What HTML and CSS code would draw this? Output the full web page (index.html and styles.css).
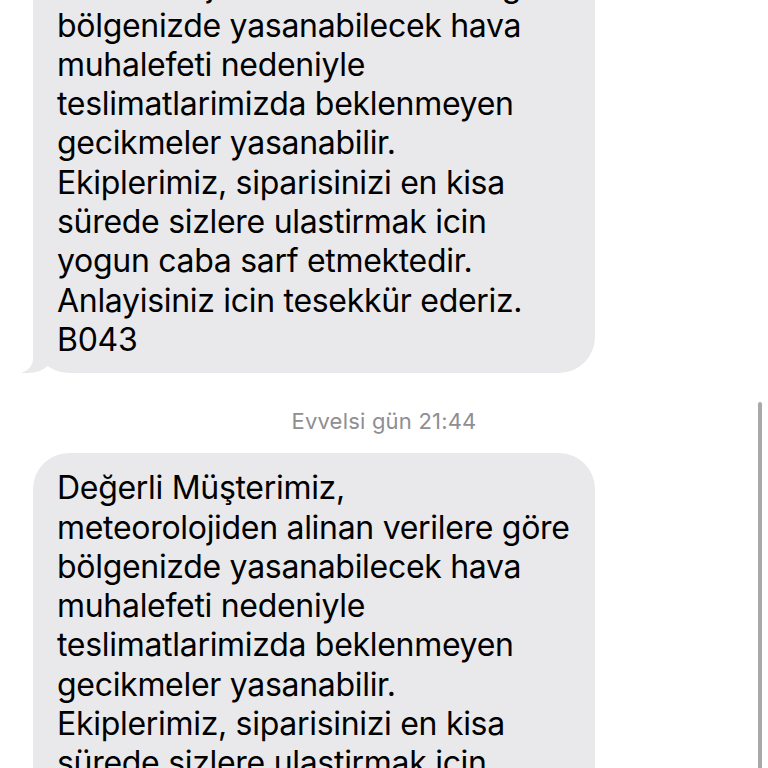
FILE: index.html
```html
<!DOCTYPE html>
<html lang="tr">
<head>
<meta charset="utf-8">
<link rel="stylesheet" href="styles.css">
</head>
<body>
<div class="thread">
  <div class="bubble">
    <p class="msg">Değerli Müşterimiz,<br>meteorolojiden alinan verilere göre<br>bölgenizde yasanabilecek hava<br>muhalefeti nedeniyle<br>teslimatlarimizda beklenmeyen<br>gecikmeler yasanabilir.<br>Ekiplerimiz, siparisinizi en kisa<br>sürede sizlere ulastirmak icin<br>yogun caba sarf etmektedir.<br>Anlayisiniz icin tesekkür ederiz.<br>B043</p>
  </div>
  <div class="stamp">Evvelsi gün 21:44</div>
  <div class="bubble">
    <p class="msg">Değerli Müşterimiz,<br>meteorolojiden alinan verilere göre<br>bölgenizde yasanabilecek hava<br>muhalefeti nedeniyle<br>teslimatlarimizda beklenmeyen<br>gecikmeler yasanabilir.<br>Ekiplerimiz, siparisinizi en kisa<br>sürede sizlere ulastirmak icin<br>yogun caba sarf etmektedir.<br>Anlayisiniz icin tesekkür ederiz.<br>B043</p>
  </div>
</div>
<div class="scrollbar"></div>
</body>
</html>
```
FILE: styles.css
```css
html, body {
  margin: 0;
  padding: 0;
  background: #ffffff;
  width: 768px;
  height: 768px;
  overflow: hidden;
}
body {
  position: relative;
  font-family: "Inter", "Liberation Sans", sans-serif;
}
.thread {
  display: flex;
  flex-direction: column;
  align-items: flex-start;
  padding-left: 33px;
  margin-top: -88px;
}
.bubble {
  position: relative;
  width: 562px;
  box-sizing: border-box;
  background: #e9e9eb;
  border-radius: 36px;
  padding: 15px 20px 14px 24px;
}
.bubble::before {
  content: "";
  position: absolute;
  left: -11px;
  bottom: 0;
  width: 34px;
  height: 36px;
  background: #e9e9eb;
  border-bottom-right-radius: 28px 24px;
}
.bubble::after {
  content: "";
  position: absolute;
  left: -40px;
  bottom: 0;
  width: 40px;
  height: 38px;
  background: #ffffff;
  border-bottom-right-radius: 16px 14px;
}
.bubble:last-child::before,
.bubble:last-child::after {
  display: none;
}
.msg {
  margin: 0;
  font-size: 32px;
  line-height: 39.3px;
  color: #000000;
  white-space: nowrap;
  letter-spacing: -0.3px;
}
.stamp {
  align-self: stretch;
  margin-left: -33px;
  text-align: center;
  color: #8e8e93;
  font-size: 22px;
  line-height: 24px;
  letter-spacing: 0.2px;
  padding: 36px 0 20px;
}
.scrollbar {
  position: absolute;
  left: 758px;
  top: 402px;
  width: 4px;
  height: 380px;
  border-radius: 2px;
  background: #a9a9a9;
}
```
